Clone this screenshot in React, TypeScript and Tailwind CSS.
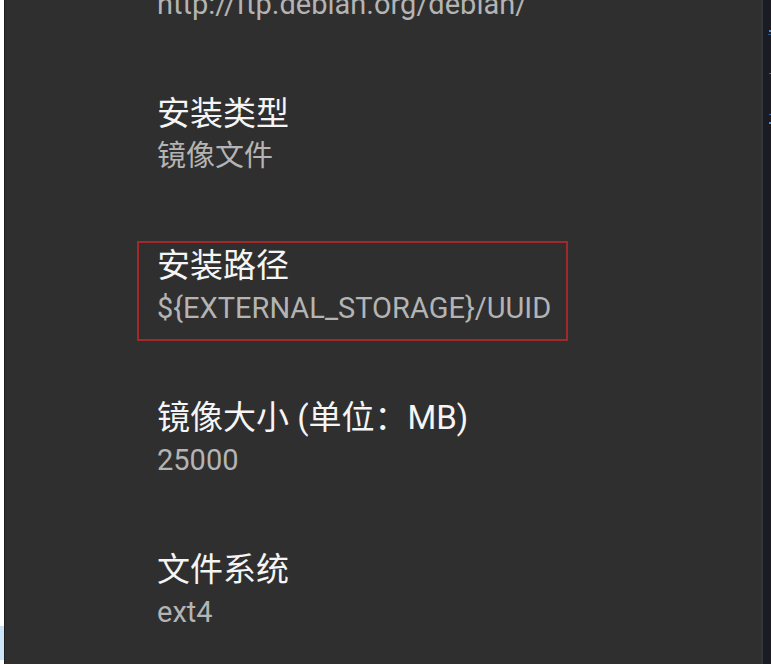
const items = [
  { title: "镜像源", value: "http://ftp.debian.org/debian/" },
  { title: "安装类型", value: "镜像文件" },
  { title: "安装路径", value: "${EXTERNAL_STORAGE}/UUID", marked: true },
  { title: "镜像大小 (单位：MB)", value: "25000" },
  { title: "文件系统", value: "ext4" },
];

const font = { fontFamily: '"Roboto", "Noto Sans CJK SC", sans-serif' };

const SettingItem = ({
  title,
  value,
  marked,
}: {
  title: string;
  value: string;
  marked?: boolean;
}) => {
  return (
    <div className="py-[33px] pl-[152px]">
      <div className="relative">
        <div className="text-[33px] leading-[43px] text-[#f5f5f5]">{title}</div>
        <div className="text-[29px] leading-[43px] text-[#b4b4b4]">{value}</div>
        {marked && (
          <span className="absolute -top-[3px] -left-[20px] w-[431px] h-[100px] border-2 border-[#a3282a]" />
        )}
      </div>
    </div>
  );
};

export default function App() {
  return (
    <div className="flex h-[664px] w-[771px] overflow-hidden bg-white" style={font}>
      <div className="flex w-[4px] flex-col">
        <div className="flex-1 bg-white" />
        <div className="h-[34px] bg-[#cce4f7]" />
        <div className="h-[4px] bg-white" />
      </div>
      <div className="w-[1px] bg-[#1e1e1e]" />
      <div className="w-[756px] bg-[#2f2f2f]">
        <div className="-mt-[93px]">
          {items.map((item) => (
            <SettingItem key={item.title} {...item} />
          ))}
        </div>
      </div>
      <div className="w-[2px] bg-[#35353d]" />
      <div className="relative flex-1 bg-[#1b1b24]">
        <span className="absolute top-[30px] right-0 h-[2px] w-[2px] bg-[#5a8ccc]" />
        <span className="absolute top-[34px] right-0 h-[1px] w-[3px] bg-[#34588a]" />
        <span className="absolute top-[73px] right-0 h-[1px] w-[2px] bg-[#3f6ea8]" />
        <span className="absolute top-[114px] right-0 h-[1px] w-[2px] bg-[#3f6ea8]" />
        <span className="absolute top-[122px] right-0 h-[2px] w-[2px] bg-[#5a8ccc]" />
      </div>
    </div>
  );
}
